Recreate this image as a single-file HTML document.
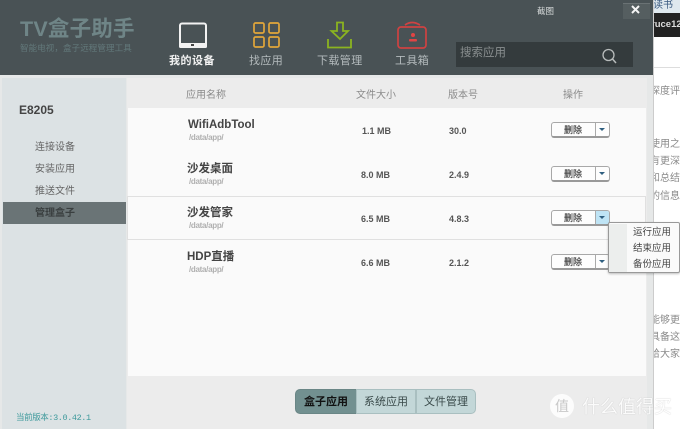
<!DOCTYPE html>
<html><head><meta charset="utf-8"><style>
*{margin:0;padding:0;box-sizing:border-box}
html,body{width:680px;height:429px;overflow:hidden;background:#fff;font-family:"Liberation Sans","Noto Sans CJK SC",sans-serif}
#w{position:absolute;left:0;top:0;width:680px;height:429px;overflow:hidden;filter:blur(.3px)}
.a{position:absolute;white-space:nowrap}
.nav{font-size:11px;color:#b4bbbd;letter-spacing:.4px}
.side{left:35px;font-size:10px;color:#666;line-height:14px}
.th{top:89px;font-size:10px;color:#8b8b8b;line-height:14px}
.name{left:187px;font-size:11.5px;font-weight:bold;color:#444;line-height:14px}
.path{left:189px;font-size:8px;color:#b0b0b0;line-height:10px;font-weight:bold;letter-spacing:-.3px}
.v{font-size:9px;font-weight:bold;color:#555;line-height:12px}
.btn{left:551px;width:59px;height:16px;background:#fdfdfd;border:1px solid #a8a8a8;border-bottom:2px solid #999;border-radius:3px}
.btn b{position:absolute;left:12px;top:1px;width:20px;font-size:9px;line-height:13px;color:#444;font-weight:normal;-webkit-text-stroke:.2px #444}
.btn i{position:absolute;left:43px;top:0;width:14px;height:13px;border-left:1px solid #aaa}
.btn i:after{content:"";position:absolute;left:3px;top:5px;border:3px solid transparent;border-top:3px solid #2f5f80;border-bottom:0}
.r{position:absolute;font-size:10px;line-height:14px;color:#8a8a8a;white-space:nowrap;left:654px;overflow:hidden;width:26px;text-indent:-4px}
.t{top:389px;height:25px;font-size:11px;line-height:24px;text-align:center;color:#3a4a4a;background:#c3d7d8;border:1px solid #a9bfc0}
</style></head><body><div id="w">
<div class="a" style="left:653px;top:0;width:27px;height:13px;background:#dfe8ee"></div>
<div class="a" style="left:653px;top:-1px;font-size:10px;color:#3a5a80;line-height:13px">读书</div>
<div class="a" style="left:653px;top:13px;width:27px;height:24px;background:#222"></div>
<div class="a" style="left:651px;top:18px;font-size:9.5px;color:#ddd;line-height:14px;font-weight:bold">ruce12</div>
<div class="a" style="left:653px;top:67px;width:27px;height:1px;background:#ddd"></div>
<div class="r" style="top:85px">探度评测</div>
<div class="r" style="top:138px">使用之后</div>
<div class="r" style="top:155px">有更深刻</div>
<div class="r" style="top:172px">和总结的</div>
<div class="r" style="top:190px">的信息量</div>
<div class="r" style="top:314px">能够更多</div>
<div class="r" style="top:331px">具备这些</div>
<div class="r" style="top:348px">给大家分</div>

<div class="a" style="left:0;top:0;width:654px;height:429px;background:#e6e8e8;border-right:1px solid #ccc"></div>
<div class="a" style="left:0;top:0;width:653px;height:75px;background:#495255"></div>
<div class="a" style="left:623px;top:3px;width:27px;height:16px;background:#555e60;border-top:1px solid #6a7274"></div>
<div class="a" style="left:20px;top:15px;font-size:21.5px;font-weight:bold;color:#6f8587;line-height:28px;letter-spacing:.2px">TV盒子助手</div>
<div class="a" style="left:20px;top:42px;font-size:8.5px;color:#62787a;line-height:12px;letter-spacing:.1px">智能电视，盒子远程管理工具</div>
<div class="a" style="left:537px;top:5px;font-size:8.5px;color:#d8dcdc;line-height:12px">截图</div>
<svg class="a" style="left:0;top:0" width="653" height="75" fill="none">
<rect x="180" y="23.500" width="26" height="23" rx="2" stroke="#f2f2f2" stroke-width="2"/>
<rect x="179" y="43" width="28" height="5" rx="1.500" fill="#f2f2f2"/>
<rect x="191" y="44" width="3" height="2" fill="#444"/>
<g stroke="#e2a63a" stroke-width="1.700"><rect x="254" y="23" width="10" height="10" rx="1.500"/><rect x="269" y="23" width="10" height="10" rx="1.500"/><rect x="254" y="37" width="10" height="10" rx="1.500"/><rect x="269" y="37" width="10" height="10" rx="1.500"/></g>
<path d="M337 22.500H343V31H348L340 39L331.500 31H337Z M328 39V47.500H351V39" stroke="#8bb320" stroke-width="1.800"/>
<rect x="398" y="27" width="28" height="21" rx="3" stroke="#cf4242" stroke-width="1.700"/>
<path d="M405 25Q412 20 420 25" stroke="#cf4242" stroke-width="1.700"/>
<circle cx="413" cy="35" r="2" fill="#e04444"/><rect x="409" y="39" width="8" height="2.500" rx="1" fill="#e04444"/>
<rect x="456" y="42" width="177" height="25" fill="#343b3d"/>
<circle cx="608.500" cy="55" r="5.500" stroke="#b8bcbc" stroke-width="1.300"/><path d="M612.500 59L616 63" stroke="#b8bcbc" stroke-width="1.500"/>
<path d="M632 6L639 13M639 6L632 13" stroke="#f5f5f5" stroke-width="2"/>
</svg>
<div class="a" style="left:169px;top:54px;font-size:11px;font-weight:bold;color:#f2f2f2;line-height:15px;letter-spacing:.5px">我的设备</div>
<div class="a nav" style="left:249px;top:54px;line-height:15px">找应用</div>
<div class="a nav" style="left:317px;top:54px;line-height:15px">下载管理</div>
<div class="a nav" style="left:395px;top:54px;line-height:15px">工具箱</div>
<div class="a" style="left:460px;top:45px;font-size:11.5px;color:#8a8f90;line-height:16px">搜索应用</div>

<div class="a" style="left:2px;top:78px;width:124px;height:351px;background:#dce2e4"></div>
<div class="a" style="left:19px;top:103px;font-size:12px;font-weight:bold;color:#444;line-height:14px">E8205</div>
<div class="a side" style="top:141px">连接设备</div>
<div class="a side" style="top:163px">安装应用</div>
<div class="a side" style="top:185px">推送文件</div>
<div class="a" style="left:3px;top:202px;width:123px;height:22px;background:#6a7476"></div>
<div class="a side" style="top:207px;color:#3a3f40;font-weight:bold">管理盒子</div>
<div class="a" style="left:16px;top:412px;font-size:8.5px;color:#3f9a9c;line-height:13px;letter-spacing:-.4px;font-family:'Liberation Mono','Noto Sans CJK SC',monospace">当前版本:3.0.42.1</div>

<div class="a" style="left:127px;top:78px;width:520px;height:351px;background:#ececec"></div>
<div class="a" style="left:128px;top:108px;width:518px;height:268px;background:#fafafa"></div>
<div class="a" style="left:127px;top:196px;width:519px;height:44px;background:#fafafa;border:1px solid #e0e0e0"></div>

<div class="a th" style="left:186px">应用名称</div>
<div class="a th" style="left:356px">文件大小</div>
<div class="a th" style="left:448px">版本号</div>
<div class="a th" style="left:563px">操作</div>

<div class="a name" style="top:118px;left:188px">WifiAdbTool</div>
<div class="a path" style="top:133px">/data/app/</div>
<div class="a v" style="left:362px;top:125px">1.1 MB</div><div class="a v" style="left:449px;top:125px">30.0</div>
<div class="a btn" style="top:122px"><b>删除</b><i></i></div>

<div class="a name" style="top:162px">沙发桌面</div>
<div class="a path" style="top:177px">/data/app/</div>
<div class="a v" style="left:361px;top:169px">8.0 MB</div><div class="a v" style="left:449px;top:169px">2.4.9</div>
<div class="a btn" style="top:166px"><b>删除</b><i></i></div>

<div class="a name" style="top:206px">沙发管家</div>
<div class="a path" style="top:221px">/data/app/</div>
<div class="a v" style="left:361px;top:213px">6.5 MB</div><div class="a v" style="left:449px;top:213px">4.8.3</div>
<div class="a btn" style="top:210px"><b>删除</b><i style="background:#bfe4f5;border-radius:0 2px 2px 0"></i></div>

<div class="a name" style="top:250px">HDP直播</div>
<div class="a path" style="top:265px">/data/app/</div>
<div class="a v" style="left:361px;top:257px">6.6 MB</div><div class="a v" style="left:449px;top:257px">2.1.2</div>
<div class="a btn" style="top:254px"><b>删除</b><i></i></div>

<div class="a" style="left:608px;top:222px;width:72px;height:51px;background:#fafafa;border:1px solid #999;border-radius:2px;box-shadow:0 1px 2px rgba(0,0,0,.25)"></div>
<div class="a" style="left:609px;top:224px;width:18px;height:48px;background:#eceeed"></div>
<div class="a" style="left:633px;top:227px;font-size:9.500px;color:#444;line-height:12px">运行应用</div>
<div class="a" style="left:633px;top:243px;font-size:9.500px;color:#444;line-height:12px">结束应用</div>
<div class="a" style="left:633px;top:259px;font-size:9.500px;color:#444;line-height:12px">备份应用</div>

<div class="a t" style="left:295px;width:62px;background:#729090;border-color:#6a8686;border-radius:5px 0 0 5px;font-weight:bold;color:#111">盒子应用</div>
<div class="a t" style="left:356px;width:60px;">系统应用</div>
<div class="a t" style="left:416px;width:60px;border-radius:0 5px 5px 0">文件管理</div>

<svg class="a" style="left:549px;top:393px" width="26" height="26"><circle cx="13" cy="13" r="12" fill="#fff" fill-opacity=".85"/></svg>
<div class="a" style="left:555px;top:398px;font-size:14px;color:#c8c8c8;line-height:16px">值</div>
<div class="a" style="left:582px;top:396px;font-size:18px;color:#fff;line-height:22px;opacity:.8;text-shadow:0 0 1px #aaa">什么值得买</div>
</div></body></html>
